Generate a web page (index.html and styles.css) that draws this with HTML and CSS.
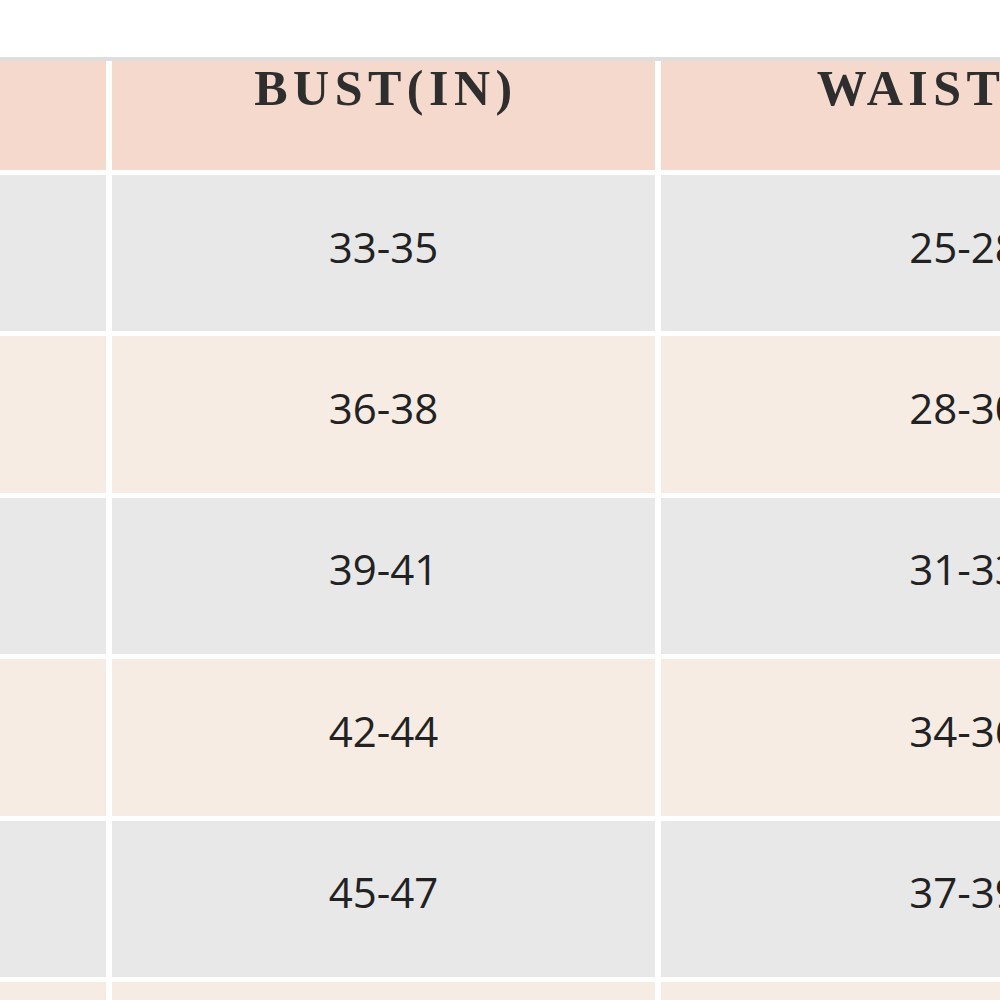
FILE: index.html
```html
<!DOCTYPE html>
<html lang="en">
<head>
<meta charset="utf-8">
<title>Size Chart</title>
<link rel="stylesheet" href="styles.css">
</head>
<body>
<div class="page">
  <div class="top"></div>
  <div class="rule"></div>
  <div class="chart">
    <div class="cell head"></div>
    <div class="cell head">BUST(IN)</div>
    <div class="cell head">WAIST(IN)</div>

    <div class="cell gray"></div>
    <div class="cell gray">33-35</div>
    <div class="cell gray">25-28</div>

    <div class="cell cream"></div>
    <div class="cell cream">36-38</div>
    <div class="cell cream">28-30</div>

    <div class="cell gray"></div>
    <div class="cell gray">39-41</div>
    <div class="cell gray">31-33</div>

    <div class="cell cream"></div>
    <div class="cell cream">42-44</div>
    <div class="cell cream">34-36</div>

    <div class="cell gray"></div>
    <div class="cell gray">45-47</div>
    <div class="cell gray">37-39</div>

    <div class="cell cream"></div>
    <div class="cell cream">48-50</div>
    <div class="cell cream">40-42</div>
  </div>
</div>
</body>
</html>
```

FILE: styles.css
```css
html, body {
  margin: 0;
  padding: 0;
  background: #ffffff;
  overflow: hidden;
}

.page {
  width: 1000px;
  height: 1000px;
  overflow: hidden;
}

.top {
  height: 57px;
  background: #ffffff;
}

.rule {
  height: 4px;
  background: #dedede;
}

.chart {
  display: grid;
  grid-template-columns: 200px 543px 606px;
  grid-template-rows: 109px repeat(6, 156.4px);
  column-gap: 6px;
  row-gap: 5px;
  margin-left: -94px;
  width: 1361px;
  background: #ffffff;
}

.cell {
  display: flex;
  justify-content: center;
  align-items: center;
  font-family: "Open Sans", "Liberation Sans", sans-serif;
  font-size: 42px;
  line-height: 1;
  color: #222222;
  padding-bottom: 13px;
  box-sizing: border-box;
}

.head {
  align-items: flex-start;
  background: #f4d9cc;
  font-family: "Liberation Serif", "DejaVu Serif", serif;
  font-weight: 700;
  font-size: 50px;
  letter-spacing: 5.5px;
  color: #2e2e2e;
  padding-top: 2px;
  padding-left: 5px;
  padding-bottom: 0;
}

.gray {
  background: #e8e8e8;
}

.cream {
  background: #f6ece4;
}
```
